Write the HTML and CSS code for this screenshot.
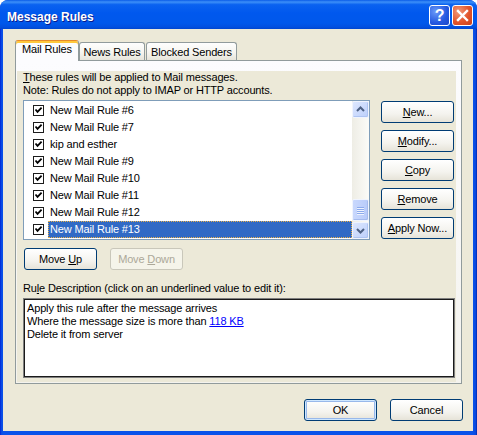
FILE: index.html
```html
<!DOCTYPE html>
<html lang="en">
<head>
    <meta charset="UTF-8">
    <title>Message Rules</title>
    <link rel="stylesheet" href="styles.css">
</head>
<body>

<div class="window">
    <div class="titlebar">
        <span class="title">Message Rules</span>
        <div class="caption-btns">
            <span class="cap-btn help">?</span>
            <span class="cap-btn close">
                <svg width="19" height="19" viewBox="0 0 19 19"><path d="M5 5 L14 14 M14 5 L5 14" stroke="#fff" stroke-width="2.4" stroke-linecap="square"/></svg>
            </span>
        </div>
    </div>

    <div class="client">
        <div class="tabs">
            <div class="tab active">Mail Rules</div>
            <div class="tab news">News Rules</div>
            <div class="tab blocked">Blocked Senders</div>
        </div>

        <div class="tab-page">
            <div class="page">
                <p class="intro"><u>T</u>hese rules will be applied to Mail messages.<br>Note: Rules do not apply to IMAP or HTTP accounts.</p>

                <div class="rules-row">
                    <div class="listview">
                        <ul class="rule-list">
                            <li><svg class="check" width="11" height="11" viewBox="0 0 11 11"><rect x="0.5" y="0.5" width="10" height="10" fill="#fff" stroke="#1c1c1c"/><path d="M2.5 4.5 L4.5 6.8 L8.6 2.6" fill="none" stroke="#000" stroke-width="1.8"/></svg><span class="name">New Mail Rule #6</span></li>
                            <li><svg class="check" width="11" height="11" viewBox="0 0 11 11"><rect x="0.5" y="0.5" width="10" height="10" fill="#fff" stroke="#1c1c1c"/><path d="M2.5 4.5 L4.5 6.8 L8.6 2.6" fill="none" stroke="#000" stroke-width="1.8"/></svg><span class="name">New Mail Rule #7</span></li>
                            <li><svg class="check" width="11" height="11" viewBox="0 0 11 11"><rect x="0.5" y="0.5" width="10" height="10" fill="#fff" stroke="#1c1c1c"/><path d="M2.5 4.5 L4.5 6.8 L8.6 2.6" fill="none" stroke="#000" stroke-width="1.8"/></svg><span class="name">kip and esther</span></li>
                            <li><svg class="check" width="11" height="11" viewBox="0 0 11 11"><rect x="0.5" y="0.5" width="10" height="10" fill="#fff" stroke="#1c1c1c"/><path d="M2.5 4.5 L4.5 6.8 L8.6 2.6" fill="none" stroke="#000" stroke-width="1.8"/></svg><span class="name">New Mail Rule #9</span></li>
                            <li><svg class="check" width="11" height="11" viewBox="0 0 11 11"><rect x="0.5" y="0.5" width="10" height="10" fill="#fff" stroke="#1c1c1c"/><path d="M2.5 4.5 L4.5 6.8 L8.6 2.6" fill="none" stroke="#000" stroke-width="1.8"/></svg><span class="name">New Mail Rule #10</span></li>
                            <li><svg class="check" width="11" height="11" viewBox="0 0 11 11"><rect x="0.5" y="0.5" width="10" height="10" fill="#fff" stroke="#1c1c1c"/><path d="M2.5 4.5 L4.5 6.8 L8.6 2.6" fill="none" stroke="#000" stroke-width="1.8"/></svg><span class="name">New Mail Rule #11</span></li>
                            <li><svg class="check" width="11" height="11" viewBox="0 0 11 11"><rect x="0.5" y="0.5" width="10" height="10" fill="#fff" stroke="#1c1c1c"/><path d="M2.5 4.5 L4.5 6.8 L8.6 2.6" fill="none" stroke="#000" stroke-width="1.8"/></svg><span class="name">New Mail Rule #12</span></li>
                            <li class="selected"><svg class="check" width="11" height="11" viewBox="0 0 11 11"><rect x="0.5" y="0.5" width="10" height="10" fill="#fff" stroke="#1c1c1c"/><path d="M2.5 4.5 L4.5 6.8 L8.6 2.6" fill="none" stroke="#000" stroke-width="1.8"/></svg><span class="name">New Mail Rule #13</span></li>
                        </ul>
                        <div class="scrollbar">
                            <div class="sb-btn">
                                <svg width="15" height="15" viewBox="0 0 15 15"><path d="M4 9 L7.5 5.5 L11 9" fill="none" stroke="#4d6185" stroke-width="2"/></svg>
                            </div>
                            <div class="sb-track">
                                <div class="sb-thumb">
                                    <span></span><span></span><span></span><span></span>
                                </div>
                            </div>
                            <div class="sb-btn">
                                <svg width="15" height="15" viewBox="0 0 15 15"><path d="M4 6 L7.5 9.5 L11 6" fill="none" stroke="#4d6185" stroke-width="2"/></svg>
                            </div>
                        </div>
                    </div>

                    <div class="side-btns">
                        <button class="btn"><u>N</u>ew...</button>
                        <button class="btn"><u>M</u>odify...</button>
                        <button class="btn"><u>C</u>opy</button>
                        <button class="btn"><u>R</u>emove</button>
                        <button class="btn"><u>A</u>pply Now...</button>
                    </div>
                </div>

                <div class="move-row">
                    <button class="btn">Move <u>U</u>p</button>
                    <button class="btn" disabled>Move <u>D</u>own</button>
                </div>

                <p class="desc-label">Ru<u>l</u>e Description (click on an underlined value to edit it):</p>
                <div class="desc-box">
                    Apply this rule after the message arrives<br>
                    Where the message size is more than <a href="#">118 KB</a><br>
                    Delete it from server
                </div>
            </div>
        </div>

        <div class="dialog-btns">
            <button class="btn default">OK</button>
            <button class="btn">Cancel</button>
        </div>
    </div>
</div>

</body>
</html>
```

FILE: styles.css
```css
* {
    margin: 0;
    padding: 0;
    box-sizing: border-box;
}

body {
    background: #fff;
    font-family: "Liberation Sans", Arial, sans-serif;
    font-size: 11px;
    letter-spacing: -0.15px;
    color: #000;
}

/* window frame */
.window {
    width: 477px;
    height: 435px;
    display: flex;
    flex-direction: column;
    background: linear-gradient(to right, #0019cf, #0848e4 1px, #0a52ea 3px, #0a52ea 473px, #0846dc 476px, #001ea0);
    border-radius: 8px 8px 0 0;
    overflow: hidden;
}

.titlebar {
    height: 29px;
    flex: none;
    display: flex;
    justify-content: space-between;
    align-items: flex-start;
    padding: 0 4px 0 7px;
    background: linear-gradient(to bottom, #0a5ce8 0%, #3d90f8 7%, #0a62f0 16%, #0058ee 45%, #0058eb 80%, #0250e0 93%, #0046cf 100%);
}

.title {
    margin-top: 10px;
    line-height: 14px;
    font-size: 12px;
    font-weight: bold;
    letter-spacing: 0;
    color: #fff;
    text-shadow: 1px 1px 0 #0a1a8a;
}

.caption-btns {
    display: flex;
    gap: 2px;
    margin-top: 5px;
}

.cap-btn {
    width: 21px;
    height: 21px;
    border: 1px solid #fff;
    border-radius: 3px;
    display: flex;
    align-items: center;
    justify-content: center;
    color: #fff;
}

.help {
    background: radial-gradient(circle at 30% 30%, #6a9af8, #2458e0 60%, #1c47c8);
    font-size: 16px;
    font-weight: bold;
    line-height: 19px;
}

.close {
    background: radial-gradient(circle at 30% 30%, #f29a7a, #e2552c 55%, #c8401c);
}

/* client area */
.client {
    flex: 1;
    margin: 0 4px 4px 3px;
    background: #ece9d8;
    padding: 11px 0 0 12px;
    display: flex;
    flex-direction: column;
}

.tabs {
    display: flex;
    align-items: flex-end;
    height: 21px;
    margin-bottom: -1px;
    position: relative;
    z-index: 1;
}

.tab {
    height: 18px;
    margin-bottom: 1px;
    border: 1px solid #919b9c;
    border-bottom: none;
    border-radius: 3px 3px 0 0;
    background: linear-gradient(#fefefe, #f6f5f0 55%, #e6e4da);
    text-align: center;
    padding-top: 3px;
    line-height: 13px;
}

.tab.active {
    width: 64px;
    height: 21px;
    margin-bottom: 0;
    padding-top: 2px;
    border-top-color: #e68b2c;
    background: #fcfcfe;
    box-shadow: inset 0 2px 0 #ffc83c;
}

.tab.news {
    width: 66px;
}

.tab.blocked {
    width: 91px;
    margin-left: 1px;
}

.tab-page {
    width: 447px;
    height: 324px;
    border: 1px solid #919b9c;
    background: linear-gradient(#fcfcfe, #f4f3ee);
    padding: 10px 5px 1px 1px;
}

.page {
    height: 100%;
    background: #ece9d8;
    padding-left: 6px;
}

.intro {
    line-height: 13px;
}

/* rules list */
.rules-row {
    display: flex;
    margin-top: 3px;
}

.listview {
    width: 347px;
    height: 140px;
    border: 1px solid #7f9db9;
    background: #fff;
    display: flex;
}

.rule-list {
    list-style: none;
    flex: 1;
    padding-top: 1px;
}

.rule-list li {
    height: 17px;
    display: flex;
    align-items: center;
    padding-left: 9px;
}

.check {
    flex: none;
    margin-right: 4px;
}

.name {
    flex: 1;
    align-self: stretch;
    padding-left: 2px;
    line-height: 17px;
}

.selected .name {
    background: #316ac5;
    color: #fff;
    outline: 1px dotted #e8b04a;
    outline-offset: -1px;
}

.scrollbar {
    width: 17px;
    display: flex;
    flex-direction: column;
    background: linear-gradient(to right, #eeede5, #fbfbf8);
}

.sb-btn {
    height: 17px;
    border: 1px solid #f0f4fe;
    border-radius: 2px;
    background: linear-gradient(135deg, #dde7fe, #bccffb);
    box-shadow: inset -1px -1px 0 #aec4f2;
    display: flex;
    align-items: center;
    justify-content: center;
}

.sb-track {
    flex: 1;
    display: flex;
    flex-direction: column;
    justify-content: flex-end;
}

.sb-thumb {
    height: 22px;
    margin-bottom: 1px;
    border: 1px solid #f0f4fe;
    border-radius: 2px;
    background: linear-gradient(to right, #c9d8fd, #b8cbfa);
    box-shadow: inset -1px -1px 0 #a5bbee;
    display: flex;
    flex-direction: column;
    align-items: center;
    justify-content: center;
    gap: 1px;
}

.sb-thumb span {
    width: 7px;
    height: 1px;
    background: #8caaec;
    box-shadow: 0 1px 0 #eef3fe;
}

/* buttons */
.btn {
    width: 73px;
    height: 22px;
    border: 1px solid #003c74;
    border-radius: 3px;
    background: linear-gradient(#fff, #f4f3ee 60%, #e6e3d8);
    font: inherit;
    letter-spacing: inherit;
    color: #000;
    text-align: center;
}

.btn:disabled {
    border-color: #c9c7ba;
    background: #f5f4ea;
    color: #aca899;
}

.btn.default {
    box-shadow: inset 0 0 0 1px #cee7ff, inset 0 0 0 2px #98b8ea;
}

.side-btns {
    display: flex;
    flex-direction: column;
    gap: 7px;
    margin: 1px 0 0 11px;
}

.move-row {
    display: flex;
    gap: 13px;
    margin: 8px 0 0 1px;
}

.desc-label {
    margin-top: 12px;
    line-height: 13px;
}

.desc-box {
    width: 432px;
    height: 80px;
    margin-top: 3px;
    border: 1px solid #7f7f7f;
    box-shadow: inset 0 0 0 1px #1a1a1a;
    background: #fff;
    padding: 3px;
    line-height: 13px;
}

.desc-box a {
    color: #0000ff;
}

.dialog-btns {
    display: flex;
    justify-content: flex-end;
    gap: 13px;
    margin: 15px 10px 0 0;
}
```
